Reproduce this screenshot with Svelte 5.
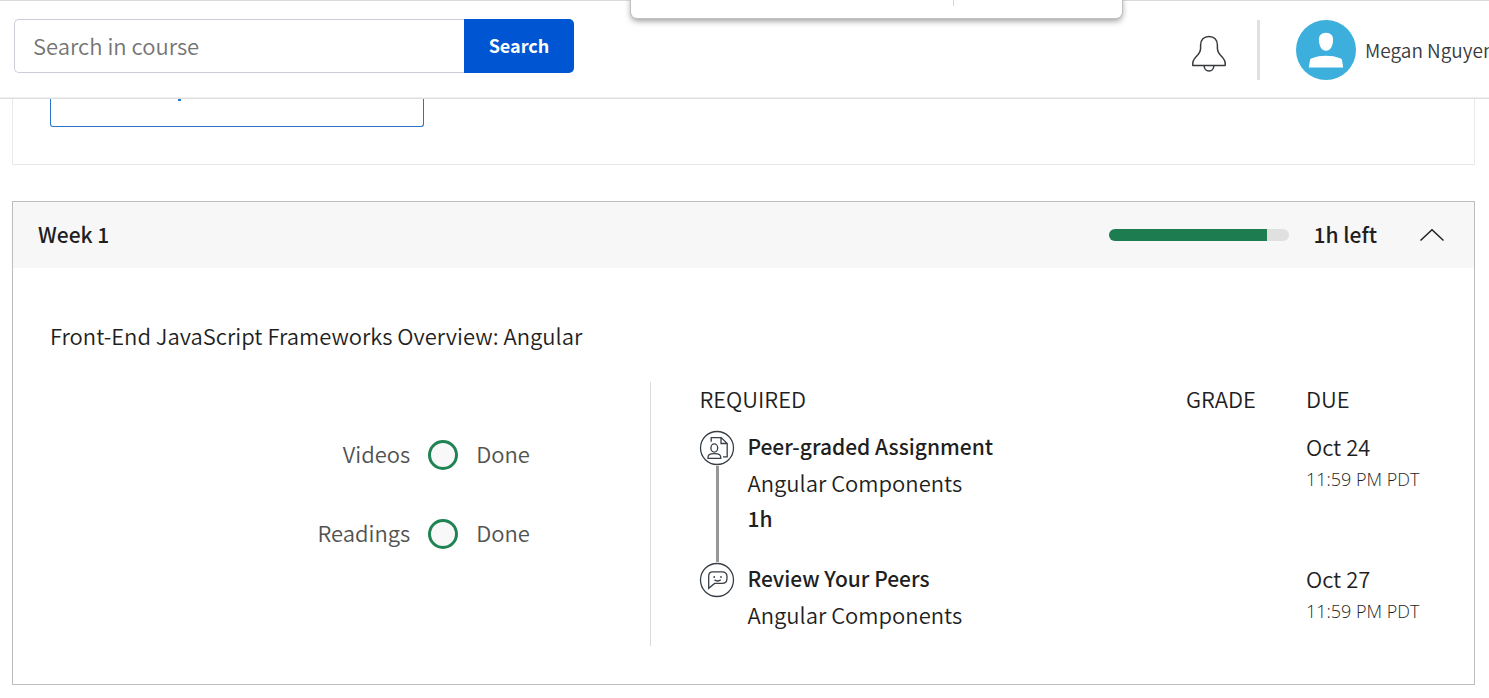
<script>
  let query = $state('');
  let open = $state(true);

  const progress = 88;
  const activities = ['Videos', 'Readings'];
  const required = [
    { icon: 'peer', title: 'Peer-graded Assignment', topic: 'Angular Components', time: '1h', date: 'Oct 24', hour: '11:59 PM PDT' },
    { icon: 'review', title: 'Review Your Peers', topic: 'Angular Components', time: '', date: 'Oct 27', hour: '11:59 PM PDT' }
  ];
</script>

<div class="page">
  <header class="topbar">
    <form class="search" onsubmit={(e) => e.preventDefault()}>
      <input type="text" placeholder="Search in course" aria-label="Search in course" bind:value={query} />
      <button type="submit">Search</button>
    </form>
    <button class="bell" aria-label="Notifications">
      <svg width="36" height="38" viewBox="0 0 36 38" fill="none" stroke="#373a3c" stroke-width="1.5" stroke-linejoin="round">
        <path d="M1.8 30.5c-.5-4 .8-6.2 3.3-8.7 3-3 4.4-5 4.5-8.3V10c0-5 3.2-8.6 8.4-8.6s8.4 3.6 8.4 8.6v3.5c.1 3.300 1.500 5.300 4.500 8.300 2.500 2.500 3.800 4.700 3.300 8.700z" />
        <path d="M13.200 30.700c0 3 2 5.400 4.800 5.400s4.800-2.400 4.800-5.400" />
      </svg>
    </button>
    <div class="rule"></div>
    <div class="profile">
      <svg width="60" height="60" viewBox="0 0 60 60" aria-hidden="true">
        <circle cx="30" cy="30" r="30" fill="#3cafdc" />
        <path fill="#fff" d="M30 12.700c4.700 0 7.300 2.900 7.100 7.300-.2 6-2.700 10.800-7.100 10.800S23.100 26 22.900 20c-.2-4.400 2.400-7.300 7.100-7.300z" />
        <path fill="#fff" d="M12.800 47.500l1.200-7.400c.2-1 .8-1.600 1.900-1.900 8-3.300 20.200-3.300 28.200 0 1.100.3 1.700.9 1.900 1.900l1.200 7.400z" />
      </svg>
      <span>Megan Nguyen</span>
    </div>
    <div class="popup"></div>
  </header>

  <main>
    <section class="previous">
      <button aria-label="Continue"></button>
    </section>

    <section class="week">
      <button class="week-head" aria-expanded={open} onclick={() => (open = !open)}>
        <span class="week-name">Week 1</span>
        <span class="bar"><span class="fill" style="width: {progress}%"></span></span>
        <span class="left">1h left</span>
        <svg class:closed={!open} width="26" height="14" viewBox="0 0 26 14" fill="none" stroke="#1f1f1f" stroke-width="1.500">
          <path d="M1.500 12.500 13 1.800l11.500 10.700" />
        </svg>
      </button>

      {#if open}
        <div class="week-body">
          <h2>Front-End JavaScript Frameworks Overview: Angular</h2>
          <div class="columns">
            <div class="activities">
              {#each activities as name}
                <div class="activity">
                  <span class="label">{name}</span>
                  <span class="ring"></span>
                  <span class="status">Done</span>
                </div>
              {/each}
            </div>
            <div class="required">
              <table>
                <thead>
                  <tr><th>REQUIRED</th><th class="grade">GRADE</th><th class="due">DUE</th></tr>
                </thead>
                <tbody>
                  {#each required as item}
                    <tr>
                      <td>
                        <div class="item">
                          <div class="track">
                            <svg width="36" height="36" viewBox="0 0 36 36" fill="none" stroke="#373f47" stroke-width="1.300">
                              <circle cx="18" cy="18" r="16.500" />
                              {#if item.icon === 'peer'}
                                <ellipse cx="15.300" cy="18" rx="3.400" ry="4.100" />
                                <path d="M9 28.300c-.2-3.300 1-4.600 6.300-4.600s6.700 1.300 6.500 4.600zM12.200 11.800V7.600h10l6 5.900V26.900h-4.200M22 7.800v5.700h6" />
                              {:else}
                                <path d="M9.700 26.300V14c0-2.800 1.300-4.200 4-4.200h9.400c3.200 0 4.900 1.700 4.900 4.900v1.500c0 3.500-1.700 5.200-5 5.200h-7.400z" />
                                <path d="M15.200 14v2M22 14v2M15.500 17.700c1.500 1.700 4.700 1.700 6.200 0" />
                              {/if}
                            </svg>
                            <div class="line"></div>
                          </div>
                          <div class="details">
                            <strong>{item.title}</strong>
                            <span>{item.topic}</span>
                            {#if item.time}<strong>{item.time}</strong>{/if}
                          </div>
                        </div>
                      </td>
                      <td></td>
                      <td>
                        <span class="date">{item.date}</span>
                        <span class="hour">{item.hour}</span>
                      </td>
                    </tr>
                  {/each}
                </tbody>
              </table>
            </div>
          </div>
        </div>
      {/if}
    </section>
  </main>
</div>

<style>
  :global(body) {
    margin: 0;
    background: #fff;
  }
  .page {
    color: #1f1f1f;
    font: 350 22px/36px "Noto Sans CJK SC", "Open Sans", sans-serif;
  }
  button,
  input {
    font: inherit;
    color: inherit;
    box-sizing: border-box;
    margin: 0;
  }
  .topbar {
    position: relative;
    display: flex;
    align-items: flex-start;
    box-sizing: border-box;
    height: 99px;
    padding: 18px 0 0 14px;
    border-top: 1px solid #dadada;
    border-bottom: 1px solid #dedede;
    background: #fff;
    box-shadow: inset 0 -1px #efefef;
  }
  .search {
    display: flex;
    flex: 0 1 560px;
    height: 54px;
  }
  .search input {
    flex: 1;
    min-width: 0;
    padding: 0 18px 2px;
    border: 1px solid #cdcdd8;
    border-right: 0;
    border-radius: 5px 0 0 5px;
    background: #fff;
  }
  .search input::placeholder {
    color: #757575;
    opacity: 1;
  }
  .search button {
    width: 110px;
    padding: 0 0 2px;
    border: 0;
    border-radius: 0 5px 5px 0;
    background: #0056d2;
    color: #fff;
    font-size: 18px;
    font-weight: 700;
  }
  .bell {
    margin: 16px 30px 0 auto;
    padding: 0;
    border: 0;
    background: none;
    line-height: 0;
  }
  .rule {
    width: 3px;
    height: 60px;
    margin: 1px 36px 0 0;
    background: #e0e0e0;
  }
  .profile {
    display: flex;
    align-items: center;
    gap: 9px;
    margin-top: 1px;
  }
  .profile span {
    width: 124px;
    overflow: hidden;
    white-space: nowrap;
    color: #373a3c;
    font-size: 19px;
  }
  .popup {
    position: absolute;
    top: -5px;
    left: 631px;
    width: 491px;
    height: 22px;
    border-radius: 0 0 6px 6px;
    background: linear-gradient(#d5d5d5, #d5d5d5) 322px 0 / 1px 10px no-repeat #fff;
    box-shadow: 0 0 0 1px #bfc2c2, 0 3px 6px rgba(0, 0, 0, 0.4);
    clip-path: inset(4px -10px -12px);
  }
  main {
    padding: 0 14px 13px 12px;
  }
  .previous {
    padding: 0 37px 37px;
    border: 1px solid #e9e9e9;
    border-top: 0;
  }
  .previous button {
    display: block;
    width: 374px;
    max-width: 100%;
    height: 28px;
    border: 1px solid #2a73cc;
    border-top: 0;
    border-radius: 0 0 3px 3px;
    background: linear-gradient(#2a73cc, #2a73cc) 127px 0 / 3px 2px no-repeat #fff;
  }
  .week {
    margin-top: 36px;
    border: 1px solid #bdbdbd;
  }
  .week-head {
    display: flex;
    align-items: center;
    width: 100%;
    height: 66px;
    padding: 0 29px 0 25px;
    border: 0;
    background: #f7f7f7;
    text-align: left;
  }
  .week-name {
    flex: 1;
  }
  .week-name,
  .left {
    padding-bottom: 2px;
  }
  .label,
  .status {
    padding-bottom: 4px;
  }
  .week-name,
  .left,
  strong {
    font-size: 21px;
    font-weight: 500;
  }
  .bar {
    width: 180px;
    height: 12px;
    margin-right: 25px;
    border-radius: 6px;
    overflow: hidden;
    background: #e0e0e0;
  }
  .fill {
    display: block;
    height: 100%;
    background: #1d7c50;
  }
  .week-head svg {
    margin-left: 42px;
  }
  .closed {
    transform: rotate(180deg);
  }
  .week-body {
    padding: 49px 36px 38px 37px;
  }
  h2 {
    margin: 0 0 29px;
    font: inherit;
  }
  .columns {
    display: grid;
    grid-template-columns: 600fr 787fr;
  }
  .activities {
    display: flex;
    flex-direction: column;
    gap: 39px;
    padding-top: 53px;
    color: #525252;
  }
  .activity {
    display: grid;
    grid-template-columns: 60% auto 1fr;
    align-items: center;
    gap: 18px;
  }
  .label {
    text-align: right;
  }
  .ring {
    box-sizing: border-box;
    width: 30px;
    height: 30px;
    border: 3px solid #1f8354;
    border-radius: 50%;
    background: #f8f8f8;
  }
  .required {
    padding-left: 48px;
    border-left: 1px solid #dadada;
  }
  table {
    width: 100%;
    table-layout: fixed;
    border-collapse: collapse;
  }
  th,
  td {
    padding: 0;
    text-align: left;
    vertical-align: top;
    font-weight: inherit;
  }
  th {
    padding-bottom: 16px;
    line-height: 32px;
  }
  .grade {
    width: 120px;
  }
  .due {
    width: 132px;
  }
  .item {
    display: flex;
    gap: 12px;
  }
  .track {
    display: flex;
    flex-direction: column;
    align-items: center;
    width: 36px;
  }
  .track svg {
    flex: none;
  }
  .line {
    flex: 1;
    width: 3px;
    background: #979797;
  }
  .details {
    margin-top: -2px;
    padding-bottom: 26px;
  }
  .details > * {
    display: block;
  }
  .date {
    display: block;
    line-height: 32px;
  }
  .hour {
    display: block;
    font: 300 18px/34px "Open Sans", "Noto Sans", sans-serif;
  }
  tr:last-child .line {
    display: none;
  }
  tr:last-child .details {
    padding-bottom: 14px;
  }
</style>
